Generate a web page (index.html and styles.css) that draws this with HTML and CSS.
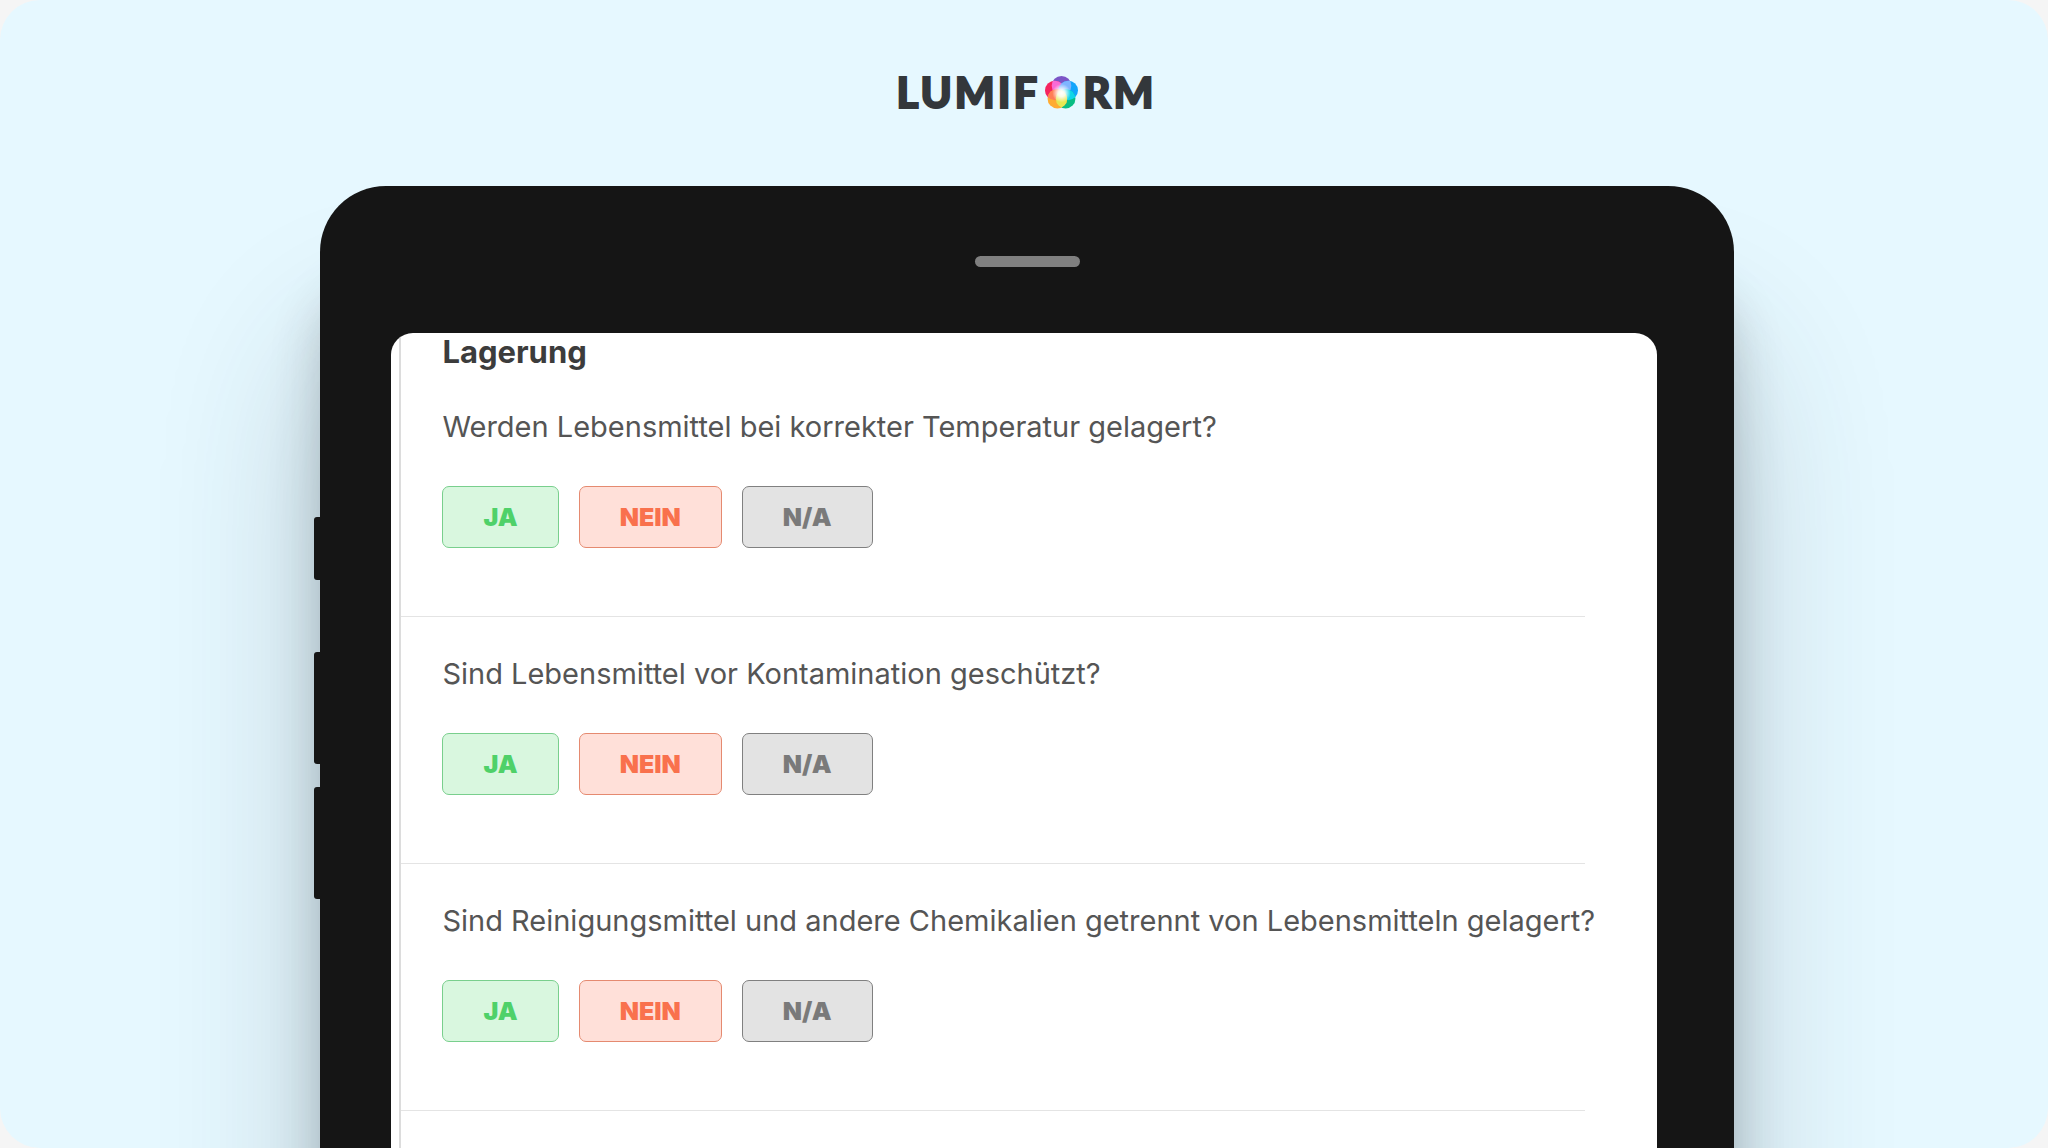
FILE: index.html
```html
<!DOCTYPE html>
<html lang="de">
<head>
  <meta charset="UTF-8">
  <meta name="viewport" content="width=device-width, initial-scale=1.0">
  <title>Lumiform - Lagerung</title>
  <link rel="stylesheet" href="styles.css">
</head>
<body>
  <div class="stage">
    <header class="logo">
      <span>LUMIF</span>
      <svg class="logo-mark" viewBox="0 0 32 32" aria-hidden="true">
        <defs>
          <clipPath id="top"><circle cx="16" cy="9.5" r="9.5"/></clipPath>
          <clipPath id="left"><circle cx="9.5" cy="14" r="9.5"/></clipPath>
          <clipPath id="right"><circle cx="22.5" cy="14" r="9.5"/></clipPath>
          <clipPath id="bottom"><circle cx="12" cy="22" r="9.5"/></clipPath>
          <radialGradient id="glow">
            <stop offset="0" stop-color="#fff"/>
            <stop offset="0.4" stop-color="#fff" stop-opacity="0.85"/>
            <stop offset="1" stop-color="#fff" stop-opacity="0"/>
          </radialGradient>
        </defs>
        <circle cx="16" cy="9.5" r="9.5" fill="#7b55c7"/>
        <circle cx="9.5" cy="14" r="9.5" fill="#f5245f"/>
        <circle cx="22.5" cy="14" r="9.5" fill="#12a5fb"/>
        <circle cx="20" cy="22" r="9.5" fill="#08bd83"/>
        <circle cx="12" cy="22" r="9.5" fill="#ffac33"/>
        <g clip-path="url(#top)">
          <circle cx="9.5" cy="14" r="9.5" fill="#f96bd6"/>
          <circle cx="22.5" cy="14" r="9.5" fill="#7fb4ff"/>
        </g>
        <g clip-path="url(#left)"><circle cx="12" cy="22" r="9.5" fill="#ff7d55"/></g>
        <g clip-path="url(#right)"><circle cx="20" cy="22" r="9.5" fill="#10d5e8"/></g>
        <g clip-path="url(#bottom)"><circle cx="20" cy="22" r="9.5" fill="#e4e853"/></g>
        <circle cx="16" cy="16.5" r="9" fill="url(#glow)"/>
      </svg>
      <span>RM</span>
    </header>

    <div class="device">
      <div class="side-keys">
        <span class="key key-small"></span>
        <span class="key"></span>
        <span class="key"></span>
      </div>
      <div class="tablet">
        <div class="speaker"></div>
        <main class="screen">
          <form class="checklist">
            <h1>Lagerung</h1>
            <section class="question">
              <p>Werden Lebensmittel bei korrekter Temperatur gelagert?</p>
              <div class="answers">
                <button type="button" class="answer yes">JA</button>
                <button type="button" class="answer no">NEIN</button>
                <button type="button" class="answer na">N/A</button>
              </div>
            </section>
            <section class="question">
              <p>Sind Lebensmittel vor Kontamination geschützt?</p>
              <div class="answers">
                <button type="button" class="answer yes">JA</button>
                <button type="button" class="answer no">NEIN</button>
                <button type="button" class="answer na">N/A</button>
              </div>
            </section>
            <section class="question">
              <p>Sind Reinigungsmittel und andere Chemikalien getrennt von Lebensmitteln gelagert?</p>
              <div class="answers">
                <button type="button" class="answer yes">JA</button>
                <button type="button" class="answer no">NEIN</button>
                <button type="button" class="answer na">N/A</button>
              </div>
            </section>
          </form>
        </main>
      </div>
    </div>
  </div>
</body>
</html>
```

FILE: styles.css
```css
* { box-sizing: border-box; }
body {
  margin: 0;
  background-color: #f5f5f5;
  font-family: Inter, Roboto, sans-serif;
}
.stage {
  display: flex; flex-direction: column; align-items: center;
  height: 100vh; overflow: hidden;
  background-color: #e6f8ff;
  border-radius: 40px;
}

/* logo */
.logo {
  display: flex; align-items: center; gap: 5px;
  flex-shrink: 0;
  height: 186px;
  padding: 0 0 2px 5px;
  color: #33373b;
  font-family: Lato, sans-serif;
  font-size: 42px; font-weight: 900; line-height: 42px;
  letter-spacing: 3px;
  -webkit-text-stroke: 2px #33373b;
}
.logo-mark { width: 33px; height: 33px; }

/* tablet */
.device {
  display: flex;
  flex-shrink: 0;
  width: 69.3%;
}
.side-keys {
  display: flex; flex-direction: column; gap: 23px;
  z-index: 1;
  width: 6px;
  padding-top: 331px;
}
.key {
  height: 112px;
  background-color: #151515;
  border-radius: 3px 0 0 3px;
}
.key-small { height: 63px; margin-bottom: 49px; }
.tablet {
  flex: 1; min-width: 0;
  padding: 70px 0 120px;
  background-color: #151515;
  border-radius: 66px;
  box-shadow: 0 160px 160px rgba(40, 60, 70, 0.24), 0 100px 50px rgba(40, 50, 50, 0.24);
}
.speaker {
  width: 105px; height: 11px;
  margin: 0 auto 66px;
  background-color: #808080;
  border-radius: 6px;
}
.screen {
  margin: 0 77px 0 71px;
  padding: 0 72px 0 8px;
  background-color: #fff;
  border-radius: 22px;
  overflow: hidden;
}

/* checklist */
.checklist {
  padding-bottom: 160px;
  border-left: 2px solid #dcdcdc;
}
.checklist h1 {
  margin: 0; padding-left: 41px;
  color: #3c3c3c;
  font-size: 31px; font-weight: 700; line-height: 37px;
}
.question {
  padding: 40px 0 68px 41px;
  border-bottom: 1px solid #e4e4e4;
}
.question p {
  margin: 0 0 42px;
  color: #555;
  font-size: 29px; line-height: 34px;
  white-space: nowrap;
}
.answers { display: flex; gap: 20px; }
.answer {
  height: 62px; padding: 0 40px;
  border: 1px solid; border-radius: 7px;
  font-family: inherit; font-size: 25px; font-weight: 900;
  cursor: pointer;
}
.yes { background-color: #d9f7df; border-color: #79cf8d; color: #4fd169; }
.no { background-color: #ffe0d9; border-color: #e58a70; color: #f9714d; }
.na { background-color: #e3e3e3; border-color: #808080; color: #7a7a7a; }
```
